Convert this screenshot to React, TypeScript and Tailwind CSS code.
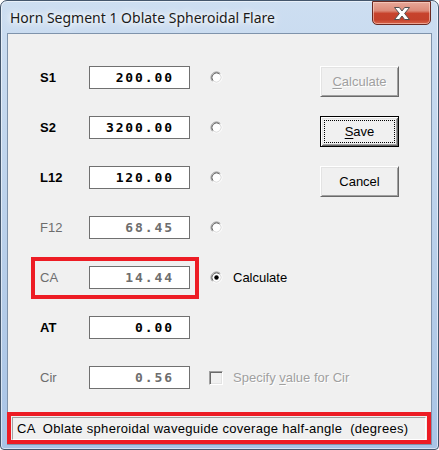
import React from "react";

function Radio({ checked = false }: { checked?: boolean }) {
  return (
    <svg width="13" height="13" viewBox="0 0 13 13" className="shrink-0">
      <circle cx="6.5" cy="6.5" r="4.5" fill="#ffffff" />
      <path d="M2.61 10.39 A5.5 5.5 0 0 1 10.39 2.61" fill="none" stroke="#909090" strokeWidth="1" />
      <path d="M10.39 2.61 A5.5 5.5 0 0 1 2.61 10.39" fill="none" stroke="#ffffff" strokeWidth="1" />
      <path d="M3.32 9.68 A4.5 4.5 0 0 1 9.68 3.32" fill="none" stroke="#606060" strokeWidth="1" />
      <path d="M9.68 3.32 A4.5 4.5 0 0 1 3.32 9.68" fill="none" stroke="#dcdcdc" strokeWidth="1" />
      {checked && <circle cx="6.5" cy="6.5" r="2.2" fill="#000000" />}
    </svg>
  );
}

function Field({
  label,
  value,
  enabled,
  children,
}: {
  label: string;
  value: string;
  enabled: boolean;
  children?: React.ReactNode;
}) {
  return (
    <div className="relative flex items-center h-[23px]">
      <div
        className={
          enabled
            ? "w-[49px] shrink-0 font-bold text-black text-[13px]"
            : "w-[49px] shrink-0 text-[#6d6d6d] text-[13px]"
        }
      >
        {label}
      </div>
      <div
        className={
          enabled
            ? "w-[101px] h-[23px] shrink-0 border border-[#707070] bg-white flex items-center justify-end pr-[15px] font-['DejaVu_Sans_Mono',monospace] font-bold text-[13px] tracking-[1.9px] text-black"
            : "w-[101px] h-[23px] shrink-0 border border-[#707070] bg-white flex items-center justify-end pr-[15px] font-['DejaVu_Sans_Mono',monospace] font-bold text-[13px] tracking-[1.9px] text-[#6d6d6d]"
        }
      >
        {value}
      </div>
      {children}
    </div>
  );
}

function CloseButton() {
  return (
    <div className="relative w-[59px] h-[24px] rounded-b-[5px] border border-[#6a2a22] bg-[linear-gradient(180deg,#e8a899_0%,#dc8a78_40%,#c7432d_52%,#c4412b_80%,#d9654a_100%)] shadow-[inset_0_0_0_1px_rgba(255,220,210,0.55)] flex items-center justify-center">
      <svg width="18" height="15" viewBox="0 0 18 15">
        <path
          d="M1.5 1.5 H6.4 L9 5 L11.6 1.5 H16.5 L11.6 7.5 L16.5 13.5 H11.6 L9 10 L6.4 13.5 H1.5 L6.4 7.5 Z"
          fill="#ffffff"
          stroke="#505050"
          strokeWidth="1"
          strokeLinejoin="round"
        />
      </svg>
    </div>
  );
}

export default function App() {
  return (
    <div className="w-[439px] h-[450px] bg-white font-['Liberation_Sans',Arial,sans-serif] text-[13px] text-black">
      <div className="relative w-[439px] h-[450px] flex flex-col rounded-t-[7px] rounded-b-[4px] border border-[#44566c] bg-[linear-gradient(180deg,#cddef1_0%,#c0d5ed_35%,#b3cbe8_70%,#a9c4e6_100%)] shadow-[inset_0_0_0_1px_rgba(255,255,255,0.55)] px-[6px] pb-[4px]">
        {/* Title bar */}
        <div className="h-[32px] shrink-0 flex items-start justify-between">
          <div className="pl-[3px] pt-[7px] font-['Noto_Sans',sans-serif] text-[14px] leading-[20px] text-[#1b1b1b] [text-shadow:0_0_8px_#ffffff,0_0_12px_#ffffff,0_0_4px_#ffffff]">
            Horn Segment 1 Oblate Spheroidal Flare
          </div>
          <div className="mr-[1px]">
            <CloseButton />
          </div>
        </div>

        {/* Client area */}
        <div className="flex-1 border border-[#7f93ab] bg-[#f0f0f0] flex flex-col">
          <div className="flex pt-[32px]">
            {/* Fields */}
            <div className="w-[312px] shrink-0 pl-[32px] flex flex-col gap-[27px]">
              <Field label="S1" value="200.00" enabled>
                <div className="ml-[20px] flex">
                  <Radio />
                </div>
              </Field>
              <Field label="S2" value="3200.00" enabled>
                <div className="ml-[20px] flex">
                  <Radio />
                </div>
              </Field>
              <Field label="L12" value="120.00" enabled>
                <div className="ml-[20px] flex">
                  <Radio />
                </div>
              </Field>
              <Field label="F12" value="68.45" enabled={false}>
                <div className="ml-[20px] flex">
                  <Radio />
                </div>
              </Field>
              <Field label="CA" value="14.44" enabled={false}>
                <div className="ml-[20px] flex items-center">
                  <Radio checked />
                  <span className="ml-[10px] whitespace-nowrap">Calculate</span>
                </div>
                <div className="absolute -left-[9px] -top-[9px] w-[168px] h-[42px] border-4 border-[#ed1c24] pointer-events-none" />
              </Field>
              <Field label="AT" value="0.00" enabled />
              <Field label="Cir" value="0.56" enabled={false}>
                <div className="ml-[19px] flex items-center">
                  <div className="w-[14px] h-[14px] shrink-0 border border-t-[#a0a0a0] border-l-[#a0a0a0] border-r-white border-b-white bg-[#f0f0f0] shadow-[inset_1px_1px_0_#696969,inset_-1px_-1px_0_#e3e3e3]" />
                  <span className="ml-[10px] whitespace-nowrap text-[#a0a0a0] [text-shadow:1px_1px_0_#ffffff]">
                    Specify <span className="underline underline-offset-[2px]">v</span>alue for Cir
                  </span>
                </div>
              </Field>
            </div>

            {/* Buttons */}
            <div className="flex flex-col gap-[19px]">
              <div className="w-[79px] h-[31px] border border-t-white border-l-white border-r-[#696969] border-b-[#696969] bg-[#f0f0f0] shadow-[inset_1px_1px_0_#e3e3e3,inset_-1px_-1px_0_#a0a0a0] flex items-center justify-center text-[#a0a0a0] [text-shadow:1px_1px_0_#ffffff]">
                <span>
                  <span className="underline underline-offset-[2px]">C</span>alculate
                </span>
              </div>
              <div className="relative w-[79px] h-[31px] border border-black bg-[#f0f0f0] shadow-[inset_1px_1px_0_#ffffff,inset_-1px_-1px_0_#696969,inset_2px_2px_0_#e3e3e3,inset_-2px_-2px_0_#a0a0a0] flex items-center justify-center">
                <span>
                  <span className="underline underline-offset-[2px]">S</span>ave
                </span>
                <div className="absolute inset-[3px] border border-dotted border-black pointer-events-none" />
              </div>
              <div className="w-[79px] h-[31px] border border-t-white border-l-white border-r-[#696969] border-b-[#696969] bg-[#f0f0f0] shadow-[inset_1px_1px_0_#e3e3e3,inset_-1px_-1px_0_#a0a0a0] flex items-center justify-center">
                Cancel
              </div>
            </div>
          </div>

          {/* Status bar */}
          <div className="mt-auto -ml-[1px] w-[424px] h-[32px] border-4 border-[#ed1c24] p-[1px] pb-0">
            <div className="h-full border border-t-[#a0a0a0] border-l-[#a0a0a0] border-r-white border-b-white flex items-center pl-[4px] whitespace-pre tracking-[0.3px]">
              CA  Oblate spheroidal waveguide coverage half-angle  (degrees)
            </div>
          </div>
        </div>
      </div>
    </div>
  );
}
